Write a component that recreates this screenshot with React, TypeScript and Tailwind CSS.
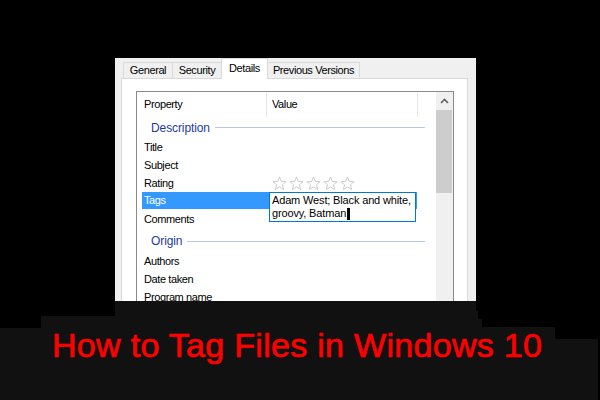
import React from "react";

const Star = () => (
  <svg width="15" height="15" viewBox="0 0 24 24" className="shrink-0">
    <polygon
      points="12,1.5 14.9,8.6 22.5,9.1 16.7,14 18.6,21.6 12,17.5 5.4,21.6 7.3,14 1.5,9.1 9.1,8.6"
      fill="#ffffff"
      stroke="#c4c4c4"
      strokeWidth="1.4"
      strokeLinejoin="round"
    />
  </svg>
);

const Row = ({ label, children }: { label: string; children?: React.ReactNode }) => (
  <div className="flex h-[18px] items-center">
    <div className="w-[130px] pl-[7px] text-[11px] tracking-[-0.4px] text-black">{label}</div>
    <div className="flex items-center gap-[2px] pl-[5px]">{children}</div>
  </div>
);

const Group = ({ label, h, pt }: { label: string; h: string; pt: string }) => (
  <div className={`flex items-center pl-[14px] pr-[11px] ${h} ${pt}`}>
    <span className="text-[12px] tracking-[-0.1px] text-[#1e3a9e] leading-none">{label}</span>
    <div className="ml-[5px] h-px flex-1 bg-[#b7c6e8]" />
  </div>
);

export default function App() {
  return (
    <div className="flex h-[400px] w-[600px] flex-col overflow-hidden bg-black font-['Liberation_Sans',Arial,sans-serif]">
      <div className="h-[58px] shrink-0" />
      {/* Dialog */}
      <div className="ml-[115px] flex h-[243px] w-[361px] shrink-0 flex-col overflow-hidden bg-[#f0f0f0]">
        {/* Tabs */}
        <div className="flex h-[20px] shrink-0 items-end pl-[8px] text-[11px] tracking-[-0.4px] text-black">
          <div className="flex h-[16px] w-[49px] items-center justify-center border-l border-t border-[#d9d9d9] bg-[#f0f0f0]">
            General
          </div>
          <div className="flex h-[16px] w-[49px] items-center justify-center border-l border-t border-[#d9d9d9] bg-[#f0f0f0]">
            Security
          </div>
          <div className="relative mb-[-1px] flex h-[21px] w-[47px] items-center justify-center border-l border-r border-t border-[#d9d9d9] bg-white pb-[1px]">
            Details
          </div>
          <div className="flex h-[16px] w-[92px] items-center justify-center border-r border-t border-[#d9d9d9] bg-[#f0f0f0]">
            Previous Versions
          </div>
        </div>
        {/* Pane */}
        <div className="ml-[6px] h-[300px] w-[347px] shrink-0 border border-[#d9d9d9] bg-white pl-[14px] pt-[12px]">
          {/* List view */}
          <div className="flex h-[280px] w-[318px] border border-[#8a8a8a]">
            <div className="flex w-[299px] flex-col">
              {/* Header */}
              <div className="flex h-[25px] shrink-0 text-[11px] tracking-[-0.4px] text-black">
                <div className="flex w-[129px] items-center pl-[7px]">Property</div>
                <div className="mt-px w-px bg-[#e5e5e5]" />
                <div className="flex w-[150px] items-center pl-[5px]">Value</div>
                <div className="mt-px w-px bg-[#e5e5e5]" />
              </div>
              <Group label="Description" h="h-[21px]" pt="pt-0" />
              <Row label="Title" />
              <Row label="Subject" />
              <Row label="Rating">
                <Star />
                <Star />
                <Star />
                <Star />
                <Star />
              </Row>
              {/* Tags row (selected, editing) */}
              <div className="relative flex h-[18px]">
                <div className="ml-[5px] flex h-[17px] w-[275px] items-center bg-[#3399ff] pl-[2px] text-[11px] tracking-[-0.4px] text-white">
                  Tags
                </div>
                <div className="absolute left-[132px] top-0 h-[30px] w-[147px] border border-[#0078d7] bg-white pl-[2px] pt-[1px] text-[11px] leading-[13px] tracking-[-0.15px] text-black">
                  <div>Adam West; Black and white,</div>
                  <div className="flex items-center">
                    <span>groovy, Batman</span>
                    <span className="ml-px inline-block h-[12px] w-[3px] bg-black" />
                  </div>
                </div>
              </div>
              <Row label="Comments" />
              <Group label="Origin" h="h-[24px]" pt="pt-[2px]" />
              <Row label="Authors" />
              <Row label="Date taken" />
              <Row label="Program name" />
            </div>
            {/* Scrollbar */}
            <div className="flex w-[17px] flex-col bg-[#f0f0f0]">
              <div className="flex h-[18px] items-center justify-center">
                <svg width="9" height="6" viewBox="0 0 9 6">
                  <polyline points="1,5 4.5,1.5 8,5" fill="none" stroke="#606060" strokeWidth="1.6" />
                </svg>
              </div>
              <div className="h-[83px] w-[16px] bg-[#cdcdcd]" />
            </div>
          </div>
        </div>
      </div>
      {/* Bottom stepped band */}
      <div className="flex h-[10px] shrink-0">
        <div className="ml-[115px] w-[361px] bg-[#111111]" />
      </div>
      <div className="flex h-[5px] shrink-0">
        <div className="ml-[115px] w-[363px] bg-[#111111]" />
      </div>
      <div className="flex h-[3px] shrink-0">
        <div className="ml-[41px] w-[437px] bg-[#111111]" />
      </div>
      <div className="flex h-[8px] shrink-0">
        <div className="ml-[41px] w-[441px] bg-[#111111]" />
      </div>
      <div className="flex h-[1px] shrink-0">
        <div className="ml-[41px] w-[514px] bg-[#111111]" />
      </div>
      <div className="flex h-[11px] shrink-0">
        <div className="w-[555px] bg-[#111111]" />
      </div>
      <div className="w-[598px] flex-1 bg-[#111111]">
        <div className="mt-[-13px] whitespace-nowrap pl-[52px] text-[34px] leading-[38px] tracking-[0.3px] text-[#ff0000] [-webkit-text-stroke:0.7px_#ff0000]">
          How to Tag Files in Windows 10
        </div>
      </div>
    </div>
  );
}
